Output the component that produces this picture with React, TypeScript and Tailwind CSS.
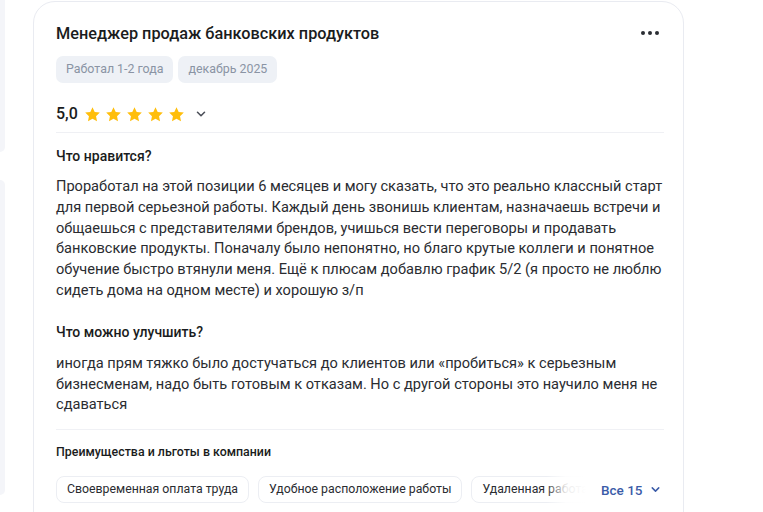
import React from "react";

const Star = () => (
  <svg width="17" height="17" viewBox="0 0 24 24" className="shrink-0">
    <path
      d="M12 1.8l3.1 6.6 7.2.9-5.3 5 1.4 7.2L12 18l-6.4 3.5 1.4-7.2-5.3-5 7.2-.9z"
      fill="#ffbe0b"
    />
  </svg>
);

const Chevron = ({ color = "#4b4f58", size = 14 }: { color?: string; size?: number }) => (
  <svg width={size} height={size} viewBox="0 0 16 16" fill="none">
    <path d="M4 6l4 4 4-4" stroke={color} strokeWidth="1.8" strokeLinecap="round" strokeLinejoin="round" />
  </svg>
);

export default function App() {
  return (
    <div
      className="w-[763px] h-[512px] overflow-hidden bg-white flex items-start"
      style={{ fontFamily: "Roboto, 'Noto Sans', Arial, sans-serif" }}
    >
      <div className="w-[5px] shrink-0 flex flex-col">
        <div className="h-[152px] bg-[#f4f5f9] rounded-br-[14px]" />
        <div className="mt-[28px] h-[315px] bg-[#f4f5f9] rounded-r-[14px]" />
      </div>
      <div className="ml-[28px] mt-[1px] w-[651px] shrink-0 border border-[#e9ebf1] rounded-[22px] bg-white pl-[22px] pr-[19px] pt-[21px] pb-[60px] text-[#1f2126]">
        <div className="flex items-start justify-between">
          <div className="text-[16.3px] leading-[22px] font-medium text-[#1a1c20]">
            Менеджер продаж банковских продуктов
          </div>
          <div className="flex gap-[3px] pt-[8px] pr-[5px]">
            <span className="w-[4px] h-[4px] rounded-full bg-[#2a2d33]" />
            <span className="w-[4px] h-[4px] rounded-full bg-[#2a2d33]" />
            <span className="w-[4px] h-[4px] rounded-full bg-[#2a2d33]" />
          </div>
        </div>
        <div className="mt-[11px] flex gap-[5px]">
          <span className="h-[27px] px-[10px] flex items-center rounded-[7px] bg-[#eef1f6] text-[12.4px] text-[#8a94a4]">
            Работал 1-2 года
          </span>
          <span className="h-[27px] px-[10px] flex items-center rounded-[7px] bg-[#eef1f6] text-[12.4px] text-[#8a94a4]">
            декабрь 2025
          </span>
        </div>
        <div className="mt-[21px] flex items-center">
          <span className="text-[16px] leading-[20px] font-medium text-[#1a1c20]">5,0</span>
          <div className="ml-[6px] flex gap-[4px]">
            <Star />
            <Star />
            <Star />
            <Star />
            <Star />
          </div>
          <span className="ml-[9px] flex items-center">
            <Chevron />
          </span>
        </div>
        <div className="mt-[8px] h-px bg-[#eff0f4]" />
        <div className="mt-[13px] text-[14px] leading-[20px] font-medium text-[#1a1c20]">Что нравится?</div>
        <p className="mt-[10px] text-[14.6px] leading-[20.8px] text-[#2a2c31]">
          Проработал на этой позиции 6 месяцев и могу сказать, что это реально классный старт для первой
          серьезной работы. Каждый день звонишь клиентам, назначаешь встречи и общаешься с представителями
          брендов, учишься вести переговоры и продавать банковские продукты. Поначалу было непонятно, но благо
          крутые коллеги и понятное обучение быстро втянули меня. Ещё к плюсам добавлю график 5/2 (я просто не
          люблю сидеть дома на одном месте) и хорошую з/п
        </p>
        <div className="mt-[21px] text-[14px] leading-[20px] font-medium text-[#1a1c20]">Что можно улучшить?</div>
        <p className="mt-[11px] text-[14.6px] leading-[20.8px] text-[#2a2c31]">
          иногда прям тяжко было достучаться до клиентов или «пробиться» к серьезным бизнесменам, надо быть
          готовым к отказам. Но с другой стороны это научило меня не сдаваться
        </p>
        <div className="mt-[14px] h-px bg-[#f0f1f5]" />
        <div className="mt-[13px] text-[12.4px] leading-[18px] font-medium text-[#1a1c20]">
          Преимущества и льготы в компании
        </div>
        <div className="mt-[15px] flex items-center">
          <div className="relative w-[530px] overflow-hidden">
            <div className="flex gap-[9px]">
              <span className="shrink-0 h-[27px] px-[10px] flex items-center rounded-[8px] border border-[#eceef3] text-[12.3px] text-[#2a2c31]">
                Своевременная оплата труда
              </span>
              <span className="shrink-0 h-[27px] px-[10px] flex items-center rounded-[8px] border border-[#eceef3] text-[12.3px] text-[#2a2c31]">
                Удобное расположение работы
              </span>
              <span className="shrink-0 h-[27px] px-[10px] flex items-center rounded-[8px] border border-[#eceef3] text-[12.3px] text-[#2a2c31]">
                Удаленная работа
              </span>
            </div>
            <div className="absolute right-0 top-0 h-full w-[40px] bg-gradient-to-r from-transparent via-white/90 to-white" />
          </div>
          <div className="ml-[15px] flex items-center gap-[6px] whitespace-nowrap text-[13.5px] font-medium text-[#3b5ca8]">
            Все 15
            <Chevron color="#3b5ca8" size={13} />
          </div>
        </div>
      </div>
    </div>
  );
}
